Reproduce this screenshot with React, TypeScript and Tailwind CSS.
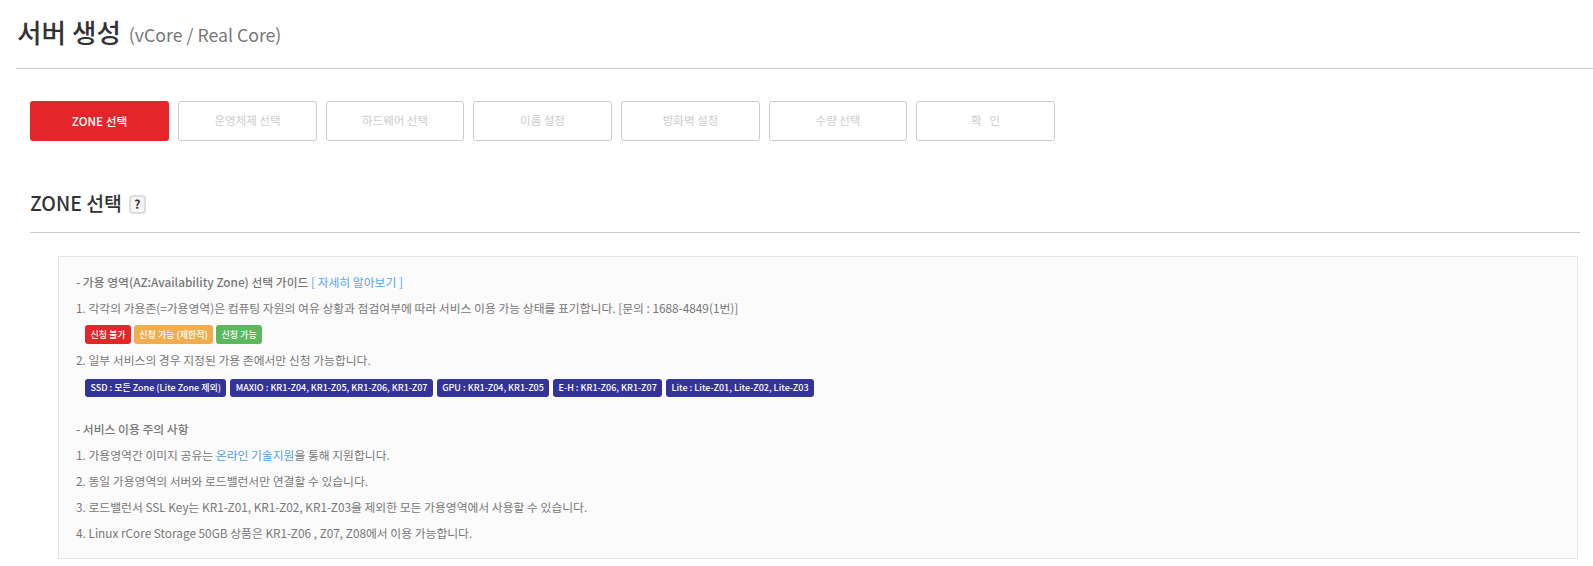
export default function App() {
  const steps = [
    { t: "운영체제 선택", w: "w-[139px]" },
    { t: "하드웨어 선택", w: "w-[138px]" },
    { t: "이름 설정", w: "w-[139px]" },
    { t: "방화벽 설정", w: "w-[139px]" },
    { t: "수량 선택", w: "w-[138px]" },
    { t: "확   인", w: "w-[139px]" },
  ];
  const zones = [
    "SSD : 모든 Zone (Lite Zone 제외)",
    "MAXIO : KR1-Z04, KR1-Z05, KR1-Z06, KR1-Z07",
    "GPU : KR1-Z04, KR1-Z05",
    "E-H : KR1-Z06, KR1-Z07",
    "Lite : Lite-Z01, Lite-Z02, Lite-Z03",
  ];
  const badge = "rounded-[3px] px-[5.4px] text-[9px] font-medium text-white";
  return (
    <div className="h-[566px] w-[1593px] overflow-hidden bg-white font-['Noto_Sans_CJK_KR','Noto_Sans',sans-serif] text-[#777]">
      <div className="ml-[16px] flex h-[69px] items-center gap-[8px] border-b border-[#ccc] pb-[4px] pl-[1px]">
        <h1 className="text-[26.6px] font-medium text-[#333]">서버 생성</h1>
        <span className="mt-[5px] text-[17.7px] text-[#777]">(vCore / Real Core)</span>
      </div>
      <div className="ml-[30px] mt-[32px] flex gap-[9px]">
        <div className="flex h-[40px] w-[139px] items-center justify-center rounded-[3px] bg-[#e4252a] text-[11.7px] font-medium text-white">ZONE 선택</div>
        {steps.map((s) => (
          <div key={s.t} className={`flex h-[40px] ${s.w} items-center justify-center whitespace-pre rounded-[3px] border border-[#ccc] bg-white text-[11.5px] text-[#ccc]`}>{s.t}</div>
        ))}
      </div>
      <div className="ml-[30px] mt-[39px] flex h-[53px] w-[1550px] items-center gap-[7px] border-b border-[#ccc] pb-[7px]">
        <h2 className="text-[19.4px] font-medium leading-none text-[#333]">ZONE 선택</h2>
        <span className="mt-[3px] flex h-[19px] w-[17px] items-center justify-center rounded-[4px] border-2 border-[#ddd] bg-[#f5f5f5] text-[12px] font-bold text-[#333]">?</span>
      </div>
      <div className="ml-[58px] mt-[23px] h-[303px] w-[1520px] border border-[#e5e5e5] bg-[#fbfbfb] px-[17px] pt-[13px] text-[11.8px]">
        <p className="h-[25px] leading-[24px]"><span className="font-medium">- 가용 영역(AZ:Availability Zone) 선택 가이드</span> <span className="text-[#55a6f0]">[ 자세히 알아보기 ]</span></p>
        <p className="h-[26px] leading-[26px]">1. 각각의 가용존(=가용영역)은 컴퓨팅 자원의 여유 상황과 점검여부에 따라 서비스 이용 가능 상태를 표기합니다. [문의 : 1688-4849(1번)]</p>
        <div className="flex h-[27px] items-center gap-[3px] pl-[9px]">
          <span className={`${badge} flex h-[19px] items-center bg-[#e4252a]`}>신청 불가</span>
          <span className={`${badge} flex h-[19px] items-center bg-[#f0ad4e]`}>신청 가능 (제한적)</span>
          <span className={`${badge} flex h-[19px] items-center bg-[#5cb85c]`}>신청 가능</span>
        </div>
        <p className="h-[26px] leading-[24px]">2. 일부 서비스의 경우 지정된 가용 존에서만 신청 가능합니다.</p>
        <div className="flex h-[27px] items-center gap-[3.9px] pl-[9px]">
          {zones.map((z) => <span key={z} className={`${badge} flex h-[18px] items-center bg-[#333399]`}>{z}</span>)}
        </div>
        <p className="h-[15px]"></p>
        <p className="h-[26px] font-medium leading-[26px]">- 서비스 이용 주의 사항</p>
        <p className="h-[26px] leading-[26px]">1. 가용영역간 이미지 공유는 <span className="text-[#4a9eea]">온라인 기술지원</span>을 통해 지원합니다.</p>
        <p className="h-[26px] leading-[26px]">2. 동일 가용영역의 서버와 로드밸런서만 연결할 수 있습니다.</p>
        <p className="h-[26px] leading-[26px]">3. 로드밸런서 SSL Key는 KR1-Z01, KR1-Z02, KR1-Z03을 제외한 모든 가용영역에서 사용할 수 있습니다.</p>
        <p className="h-[26px] leading-[26px]">4. Linux rCore Storage 50GB 상품은 KR1-Z06 , Z07, Z08에서 이용 가능합니다.</p>
      </div>
    </div>
  );
}
